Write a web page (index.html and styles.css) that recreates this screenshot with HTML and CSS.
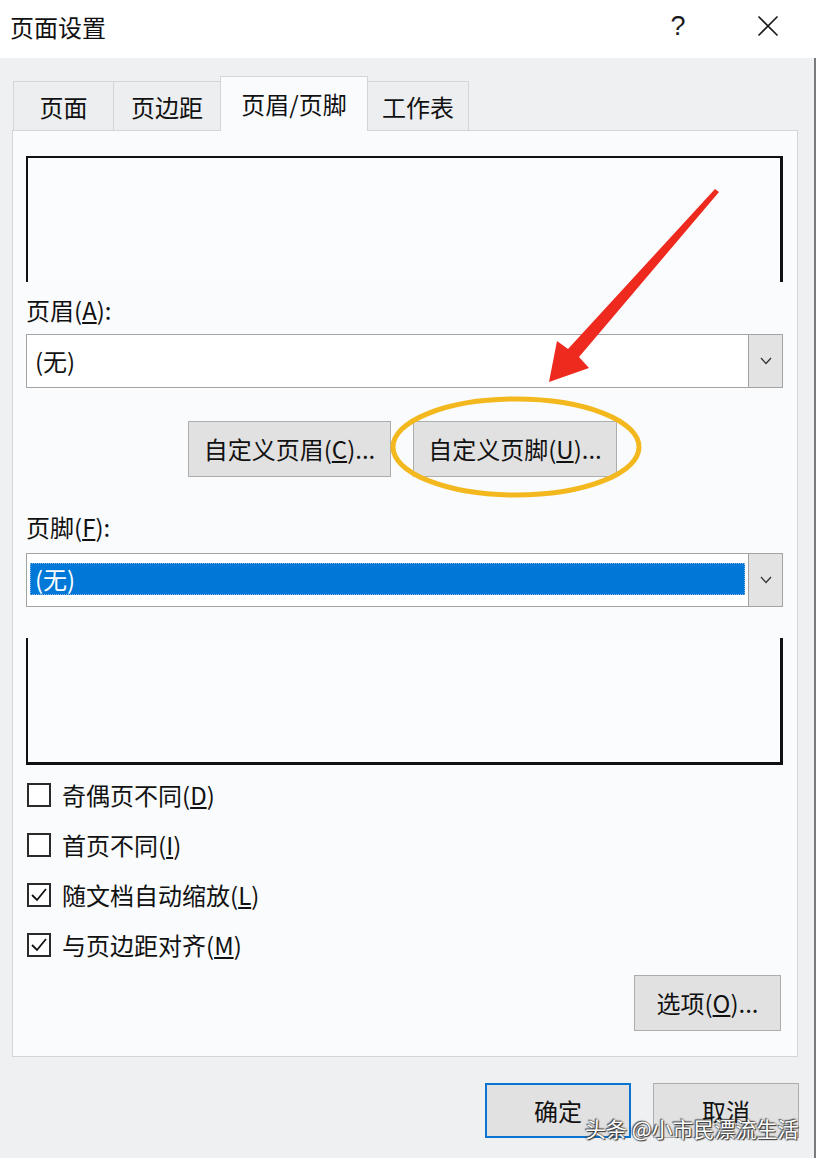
FILE: index.html
```html
<!DOCTYPE html>
<html lang="zh-CN">
<head>
<meta charset="utf-8">
<title>页面设置</title>
<link rel="stylesheet" href="styles.css">
</head>
<body>
<div class="window">
  <header class="titlebar">
    <span class="title">页面设置</span>
    <div class="title-actions">
      <span class="help">?</span>
      <span class="close">
        <svg width="22" height="22" viewBox="0 0 22 22"><path d="M1.5 1.5 L20.5 20.5 M20.5 1.5 L1.5 20.5" stroke="#1a1a1a" stroke-width="1.6" fill="none"/></svg>
      </span>
    </div>
  </header>
  <div class="client">
    <nav class="tabs">
      <div class="tab tab-1">页面</div>
      <div class="tab tab-2">页边距</div>
      <div class="tab tab-3 active">页眉/页脚</div>
      <div class="tab tab-4">工作表</div>
    </nav>
    <section class="panel">
      <div class="preview preview-header"></div>
      <div class="field-label">页眉(<u>A</u>):</div>
      <div class="combo">
        <div class="combo-value">(无)</div>
        <div class="combo-btn"><svg width="12" height="8" viewBox="0 0 12 8"><path d="M1 1 L6 6.5 L11 1" stroke="#333" stroke-width="1.3" fill="none"/></svg></div>
      </div>
      <div class="custom-buttons">
        <div class="btn btn-custom-h">自定义页眉(<u>C</u>)...</div>
        <div class="btn btn-custom-f">自定义页脚(<u>U</u>)...</div>
      </div>
      <div class="field-label label-footer">页脚(<u>F</u>):</div>
      <div class="combo combo-footer">
        <div class="combo-value"><span class="selected">(无)</span></div>
        <div class="combo-btn"><svg width="12" height="8" viewBox="0 0 12 8"><path d="M1 1 L6 6.5 L11 1" stroke="#333" stroke-width="1.3" fill="none"/></svg></div>
      </div>
      <div class="preview preview-footer"></div>
      <div class="checks">
        <div class="check"><span class="box"></span><span>奇偶页不同(<u>D</u>)</span></div>
        <div class="check"><span class="box"></span><span>首页不同(<u>I</u>)</span></div>
        <div class="check"><span class="box"><svg width="20" height="20" viewBox="0 0 20 20"><path d="M3 10 L8 15 L17 4" stroke="#111" stroke-width="1.8" fill="none"/></svg></span><span>随文档自动缩放(<u>L</u>)</span></div>
        <div class="check"><span class="box"><svg width="20" height="20" viewBox="0 0 20 20"><path d="M3 10 L8 15 L17 4" stroke="#111" stroke-width="1.8" fill="none"/></svg></span><span>与页边距对齐(<u>M</u>)</span></div>
      </div>
      <div class="options-row">
        <div class="btn btn-options">选项(<u>O</u>)...</div>
      </div>
    </section>
    <div class="dialog-buttons">
      <div class="btn btn-dialog btn-ok">确定</div>
      <div class="btn btn-dialog">取消</div>
    </div>
  </div>
  <svg class="annotations" width="816" height="1158" viewBox="0 0 816 1158">
    <ellipse cx="516" cy="447" rx="123" ry="48" fill="none" stroke="#f4b81f" stroke-width="5"/>
    <polygon points="715,189 719,192 579,357 589,368 549,382 557,341 568,349" fill="#ee2a1f"/>
  </svg>
  <div class="watermark">头条 @小市民漂流生活</div>
</div>
</body>
</html>
```

FILE: styles.css
```css
* { box-sizing: border-box; }

html, body {
  margin: 0;
  padding: 0;
}

body {
  font-family: "Noto Sans CJK SC", "Noto Sans", sans-serif;
  color: #111;
  background: #eff0f2;
}

u { text-decoration: underline; text-underline-offset: 2px; }

.window {
  position: relative;
  width: 816px;
  height: 1158px;
  overflow: hidden;
}

.titlebar {
  height: 58px;
  background: #ffffff;
  display: flex;
  align-items: center;
  justify-content: space-between;
  padding-left: 10px;
}

.title {
  font-size: 24px;
  line-height: 30px;
  margin-top: -4px;
}

.title-actions {
  display: flex;
  align-items: center;
  gap: 50px;
  margin-right: 28px;
  margin-top: -6px;
}

.help {
  width: 40px;
  text-align: center;
  font-family: "Liberation Sans", sans-serif;
  font-size: 27px;
  line-height: 30px;
  color: #1a1a1a;
}

.close {
  width: 40px;
  display: flex;
  justify-content: center;
}

.client {
  height: 1100px;
  background: #eff0f2;
  border-right: 2px solid #7a7a7a;
}

.tabs {
  display: flex;
  align-items: flex-end;
  height: 72px;
  padding-left: 13px;
  position: relative;
  z-index: 1;
}

.tab {
  height: 49px;
  border: 1px solid #d3d5d8;
  border-bottom: none;
  background: #eceef0;
  display: flex;
  align-items: center;
  justify-content: center;
  font-size: 24px;
  line-height: 30px;
  padding-top: 2px;
}

.tab + .tab { margin-left: -1px; }

.tab-1 { width: 101px; }
.tab-2 { width: 108px; }
.tab-3 { width: 148px; }
.tab-4 { width: 102px; }

.tab.active {
  height: 55px;
  margin-bottom: -1px;
  background: #f9fbfd;
  padding-top: 0;
  position: relative;
  z-index: 2;
}

.panel {
  margin-left: 12px;
  width: 786px;
  height: 927px;
  border: 1px solid #d3d5d8;
  background: #f9fbfd;
  padding: 0 14px 0 13px;
  display: flex;
  flex-direction: column;
}

.preview {
  background: #fbfcfe;
  border: 2px solid #111;
}

.preview-header {
  margin-top: 25px;
  height: 126px;
  border-bottom: none;
  border-right-width: 3px;
}

.preview-footer {
  margin-top: 31px;
  height: 127px;
  border-top: none;
  border-right-width: 3px;
  border-bottom-width: 3px;
}

.field-label {
  margin-top: 13px;
  font-size: 24px;
  line-height: 30px;
}

.label-footer { margin-top: 35px; }

.combo {
  margin-top: 9px;
  height: 54px;
  border: 1px solid #a3a3a3;
  background: #ffffff;
  display: flex;
}

.combo-footer { margin-top: 11px; }

.combo-value {
  flex: 1;
  display: flex;
  align-items: center;
  padding-left: 8px;
  font-size: 24px;
  line-height: 30px;
}

.combo-footer .combo-value {
  padding: 9px 3px 11px 3px;
}

.selected {
  flex: 1;
  height: 32px;
  background: #0078d7;
  color: #ffffff;
  outline: 1px dotted #8ab4e0;
  outline-offset: -1px;
  display: flex;
  align-items: center;
  padding-left: 5px;
}

.combo-btn {
  width: 34px;
  border-left: 1px solid #a3a3a3;
  background: #e3e3e3;
  display: flex;
  align-items: center;
  justify-content: center;
}

.btn {
  background: #e1e1e1;
  border: 1px solid #adadad;
  display: flex;
  align-items: center;
  justify-content: center;
  font-size: 24px;
  line-height: 30px;
  color: #111;
}

.custom-buttons {
  margin-top: 33px;
  display: flex;
  justify-content: center;
  gap: 22px;
  padding-right: 4px;
}

.btn-custom-h { width: 203px; height: 56px; }
.btn-custom-f { width: 204px; height: 56px; }

.checks {
  margin-top: 5px;
  display: flex;
  flex-direction: column;
}

.check {
  height: 50px;
  display: flex;
  align-items: center;
  gap: 11px;
  font-size: 24px;
  line-height: 30px;
  padding-left: 1px;
}

.box {
  width: 24px;
  height: 24px;
  border: 2px solid #2a2a2a;
  background: #ffffff;
  display: flex;
  align-items: center;
  justify-content: center;
}

.options-row {
  margin-top: 5px;
  display: flex;
  justify-content: flex-end;
  padding-right: 2px;
}

.btn-options {
  width: 147px;
  height: 56px;
}

.dialog-buttons {
  margin-top: 26px;
  display: flex;
  justify-content: flex-end;
  gap: 22px;
  padding-right: 15px;
}

.btn-dialog {
  width: 146px;
  height: 55px;
}

.btn-ok {
  border: 2px solid #0a74d0;
}

.annotations {
  position: absolute;
  left: 0;
  top: 0;
  pointer-events: none;
}

.watermark {
  position: absolute;
  left: 585px;
  top: 1114px;
  font-size: 21px;
  line-height: 28px;
  color: #ffffff;
  white-space: nowrap;
  text-shadow: 0 0 2px #333, 1px 1px 1px #333, -1px -1px 1px #555;
}
```
